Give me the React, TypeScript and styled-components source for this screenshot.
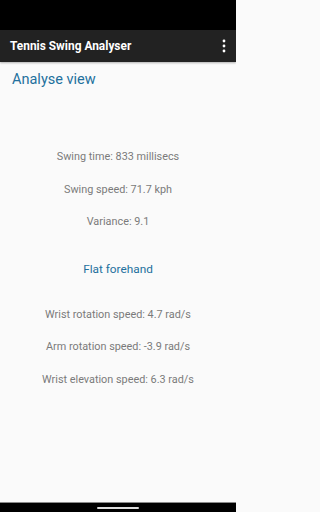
import React from "react";
import styled, { createGlobalStyle } from "styled-components";

type Stat = { label: string; value: string };

const swingStats: Stat[] = [
  { label: "Swing time", value: "833 millisecs" },
  { label: "Swing speed", value: "71.7 kph" },
  { label: "Variance", value: "9.1" },
];

const motionStats: Stat[] = [
  { label: "Wrist rotation speed", value: "4.7 rad/s" },
  { label: "Arm rotation speed", value: "-3.9 rad/s" },
  { label: "Wrist elevation speed", value: "6.3 rad/s" },
];

const MoreIcon = () => (
  <svg width="6" height="16" viewBox="0 0 6 16" fill="#ffffff">
    <circle cx="3" cy="3" r="1.4" />
    <circle cx="3" cy="8" r="1.4" />
    <circle cx="3" cy="13" r="1.4" />
  </svg>
);

const App = () => (
  <>
    <GlobalStyle />
    <Screen>
      <StatusBar />
      <Toolbar>
        <Title>Tennis Swing Analyser</Title>
        <MenuButton>
          <MoreIcon />
        </MenuButton>
      </Toolbar>
      <Content>
        <Heading>Analyse view</Heading>
        <StatGroup top={51}>
          {swingStats.map((stat) => (
            <StatRow key={stat.label}>
              {stat.label}: {stat.value}
            </StatRow>
          ))}
        </StatGroup>
        <StrokeType>Flat forehand</StrokeType>
        <StatGroup top={14}>
          {motionStats.map((stat) => (
            <StatRow key={stat.label}>
              {stat.label}: {stat.value}
            </StatRow>
          ))}
        </StatGroup>
      </Content>
      <NavBar>
        <HomeHandle />
      </NavBar>
    </Screen>
  </>
);

const GlobalStyle = createGlobalStyle`
  html, body {
    margin: 0;
    padding: 0;
    background: #fafafa;
  }

  body {
    font-family: Roboto, "Noto Sans", sans-serif;
  }
`;

const Screen = styled.div`
  display: flex;
  flex-direction: column;
  width: 236px;
  height: 512px;
  background: #fafafa;
  overflow: hidden;
`;

const StatusBar = styled.div`
  height: 30px;
  background: #000000;
`;

const Toolbar = styled.div`
  display: flex;
  align-items: center;
  justify-content: space-between;
  height: 32px;
  padding: 0 9px 0 10px;
  background: #222222;
  box-shadow: 0 1px 2px rgba(0, 0, 0, 0.3);
`;

const Title = styled.div`
  color: #ffffff;
  font-size: 11.9px;
  font-weight: 700;
`;

const MenuButton = styled.div`
  display: flex;
  align-items: center;
`;

const Content = styled.div`
  flex: 1;
  display: flex;
  flex-direction: column;
`;

const Heading = styled.div`
  margin: 8px 0 0 12px;
  line-height: 20px;
  font-size: 14.5px;
  color: #23709d;
`;

const StatGroup = styled.div<{ top: number }>`
  display: flex;
  flex-direction: column;
  margin-top: ${({ top }) => top}px;
`;

const StatRow = styled.div`
  line-height: 32.5px;
  font-size: 10.85px;
  color: #7a7a7a;
  text-align: center;
`;

const StrokeType = styled.div`
  margin-top: 14px;
  line-height: 32px;
  font-size: 11.8px;
  color: #23709d;
  text-align: center;
`;

const NavBar = styled.div`
  display: flex;
  justify-content: center;
  align-items: center;
  height: 10px;
  background: #000000;
  border-top: 1px solid #8a8a8a;
  box-sizing: border-box;
`;

const HomeHandle = styled.div`
  width: 42px;
  height: 2px;
  border-radius: 1px;
  background: #dddddd;
`;

export default App;
